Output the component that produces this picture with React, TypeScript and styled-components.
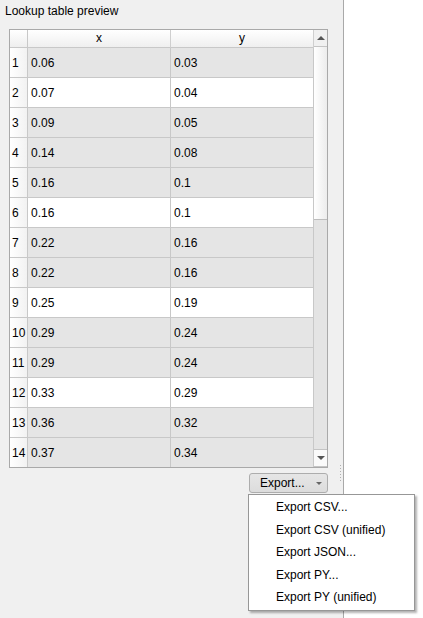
import styled, { createGlobalStyle } from "styled-components";

const GlobalStyle = createGlobalStyle`
    html, body {
        margin: 0;
        padding: 0;
        background: #f0f0f0;
        font-family: "Liberation Sans", "Noto Sans", sans-serif;
        font-size: 12px;
        color: #000;
    }
`

interface Row {
    x: string;
    y: string;
    plain: boolean;
}

const rows: Row[] = [
    { x: "0.06", y: "0.03", plain: false },
    { x: "0.07", y: "0.04", plain: true },
    { x: "0.09", y: "0.05", plain: false },
    { x: "0.14", y: "0.08", plain: false },
    { x: "0.16", y: "0.1", plain: false },
    { x: "0.16", y: "0.1", plain: true },
    { x: "0.22", y: "0.16", plain: false },
    { x: "0.22", y: "0.16", plain: false },
    { x: "0.25", y: "0.19", plain: true },
    { x: "0.29", y: "0.24", plain: false },
    { x: "0.29", y: "0.24", plain: false },
    { x: "0.33", y: "0.29", plain: true },
    { x: "0.36", y: "0.32", plain: false },
    { x: "0.37", y: "0.34", plain: false },
];

const exportItems = [
    "Export CSV...",
    "Export CSV (unified)",
    "Export JSON...",
    "Export PY...",
    "Export PY (unified)",
];

export default function App() {
    return (
        <>
            <GlobalStyle />
            <Page>
                <LeftPanel>
                    <Title>Lookup table preview</Title>
                    <Frame>
                        <Grid>
                            <Corner />
                            <HeaderCell>x</HeaderCell>
                            <HeaderCell>y</HeaderCell>
                            {rows.map((row, index) => (
                                <RowGroup key={index}>
                                    <RowHeader>{index + 1}</RowHeader>
                                    <Cell $plain={row.plain}>{row.x}</Cell>
                                    <Cell $plain={row.plain}>{row.y}</Cell>
                                </RowGroup>
                            ))}
                        </Grid>
                        <Scrollbar>
                            <ScrollButton>
                                <Arrow $up />
                            </ScrollButton>
                            <Handle />
                            <Track />
                            <ScrollButton $bottom>
                                <Arrow />
                            </ScrollButton>
                        </Scrollbar>
                    </Frame>
                    <ButtonRow>
                        <MenuAnchor>
                            <ExportButton>
                                <span>Export...</span>
                                <SmallArrow />
                            </ExportButton>
                            <Menu>
                                {exportItems.map((item) => (
                                    <MenuItem key={item}>{item}</MenuItem>
                                ))}
                            </Menu>
                        </MenuAnchor>
                    </ButtonRow>
                </LeftPanel>
                <Splitter>
                    <Grip />
                </Splitter>
                <RightPanel />
            </Page>
        </>
    )
}

const Page = styled.div`
    display: flex;
    width: 423px;
    height: 618px;
    overflow: hidden;
`

const LeftPanel = styled.div`
    width: 328px;
    padding-left: 9px;
    display: flex;
    flex-direction: column;
`

const Title = styled.div`
    height: 23px;
    line-height: 23px;
    margin-left: -4px;
    margin-bottom: 6px;
    white-space: nowrap;
`

const Frame = styled.div`
    display: flex;
    width: 317px;
    height: 437px;
    border: 1px solid #a9a9a9;
    overflow: hidden;
    background: #fff;
`

const Grid = styled.div`
    display: grid;
    grid-template-columns: 18px 143px 143px;
    grid-auto-rows: 30px;
    grid-template-rows: 18px;
    align-content: start;
`

const RowGroup = styled.div`
    display: contents;
`

const Corner = styled.div`
    background: linear-gradient(#ffffff, #eeeeee);
    border-right: 1px solid #c8c8c8;
    border-bottom: 1px solid #c8c8c8;
`

const HeaderCell = styled.div`
    background: linear-gradient(#ffffff, #efefef);
    border-right: 1px solid #cfcfcf;
    border-bottom: 1px solid #c8c8c8;
    display: flex;
    align-items: center;
    justify-content: center;
    line-height: 1;
    padding-bottom: 1px;
`

const RowHeader = styled.div`
    background: linear-gradient(to right, #ffffff, #f2f2f2);
    border-right: 1px solid #c8c8c8;
    border-bottom: 1px solid #c8c8c8;
    display: flex;
    align-items: center;
    padding-left: 2px;
    white-space: nowrap;
`

const Cell = styled.div<{ $plain: boolean }>`
    background: ${props => props.$plain ? "#ffffff" : "#e5e5e5"};
    border-right: 1px solid #c8c8c8;
    border-bottom: 1px solid #c8c8c8;
    display: flex;
    align-items: center;
    padding-left: 3px;
`

const Scrollbar = styled.div`
    width: 13px;
    display: flex;
    flex-direction: column;
    background: #e6e6e6;
`

const ScrollButton = styled.div<{ $bottom?: boolean }>`
    height: 16px;
    flex-shrink: 0;
    display: flex;
    align-items: center;
    justify-content: center;
    background: ${props => props.$bottom ? "#fafafa" : "#f0f0f0"};
    border-bottom: 1px solid #c4c4c4;
    border-top: ${props => props.$bottom ? "1px solid #c4c4c4" : "none"};
`

const Arrow = styled.div<{ $up?: boolean }>`
    width: 0;
    height: 0;
    border-left: 4px solid transparent;
    border-right: 4px solid transparent;
    ${props => props.$up
        ? "border-bottom: 4px solid #555;"
        : "border-top: 4px solid #555;"}
`

const Handle = styled.div`
    height: 172px;
    flex-shrink: 0;
    background: linear-gradient(to right, #ffffff, #ececec);
    border-bottom: 1px solid #bdbdbd;
`

const Track = styled.div`
    flex: 1;
    background: #e4e4e4;
`

const ButtonRow = styled.div`
    display: flex;
    justify-content: flex-end;
    margin-top: 5px;
    width: 319px;
`

const MenuAnchor = styled.div`
    position: relative;
`

const ExportButton = styled.div`
    border: 1px solid #adadad;
    border-radius: 3px;
    background: linear-gradient(#e6e6e6, #dcdcdc);
    display: flex;
    align-items: center;
    justify-content: space-between;
    padding: 0 5px 0 10px;
    box-sizing: border-box;
    width: 79px;
    height: 20px;
`

const SmallArrow = styled.div`
    width: 0;
    height: 0;
    border-left: 3px solid transparent;
    border-right: 3px solid transparent;
    border-top: 3px solid #666;
`

const Menu = styled.div`
    position: absolute;
    top: 21px;
    left: -1px;
    width: 165px;
    padding: 1px 0;
    background: #fff;
    border: 1px solid #979797;
    box-shadow: 2px 2px 2px rgba(0, 0, 0, 0.3);
`

const MenuItem = styled.div`
    height: 22.5px;
    line-height: 22.5px;
    padding-left: 27px;
    white-space: nowrap;
`

const Splitter = styled.div`
    width: 6px;
    padding-top: 465px;
    display: flex;
    justify-content: center;
`

const Grip = styled.div`
    width: 1px;
    height: 17px;
    background: repeating-linear-gradient(#b0b0b0 0 1px, transparent 1px 3px);
`

const RightPanel = styled.div`
    flex: 1;
    background: #fff;
    border-left: 1px solid #a9a9a9;
`
